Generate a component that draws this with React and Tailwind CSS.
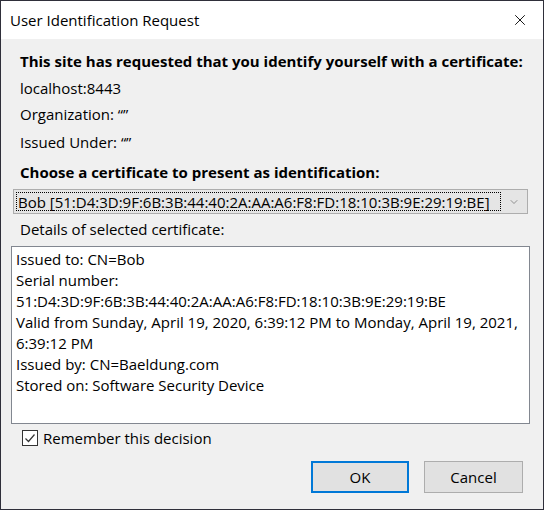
import { X, ChevronDown } from 'lucide-react'

// dialog text, split so every line breaks where the screenshot does
const details = [
  'Issued to: CN=Bob',
  'Serial number:',
  '51:D4:3D:9F:6B:3B:44:40:2A:AA:A6:F8:FD:18:10:3B:9E:29:19:BE',
  'Valid from Sunday, April 19, 2020, 6:39:12 PM to Monday, April 19, 2021,',
  '6:39:12 PM',
  'Issued by: CN=Baeldung.com',
  'Stored on: Software Security Device',
]

export default function App() {
  return (
    <div
      className="w-[544px] h-[510px] flex flex-col border border-[#2f2f3a] bg-[#f0f0f0] text-black text-[15px] leading-[20px]"
      style={{ fontFamily: '"Segoe UI", "Open Sans", sans-serif' }}
    >
      {/* title bar */}
      <div className="h-[38px] bg-white flex items-center justify-between pl-[9px] pr-[14px]">
        <span>User Identification Request</span>
        <X size={18} strokeWidth={1.2} />
      </div>

      <div className="flex flex-col pl-[19px] pt-[12px]">
        <div className="font-bold whitespace-nowrap">This site has requested that you identify yourself with a certificate:</div>
        <div className="mt-[7px]">localhost:8443</div>
        <div className="mt-[6px]">Organization: “”</div>
        <div className="mt-[8px]">Issued Under: “”</div>
        <div className="mt-[10px] font-bold">Choose a certificate to present as identification:</div>
      </div>

      {/* combobox */}
      <div className="mt-[7px] ml-[12px] mr-[15px] h-[25px] flex items-center border border-[#adadad] bg-[#e5e5e5]">
        <div className="ml-[2px] h-[19px] flex-1 flex items-center border border-dotted border-black px-[1px] whitespace-nowrap">
          Bob [51:D4:3D:9F:6B:3B:44:40:2A:AA:A6:F8:FD:18:10:3B:9E:29:19:BE]
        </div>
        <div className="w-[26px] flex justify-center text-[#555]">
          <ChevronDown size={12} strokeWidth={1.2} />
        </div>
      </div>

      <div className="ml-[19px] mt-[5px]">Details of selected certificate:</div>

      {/* details box */}
      <div className="mt-[7px] ml-[10px] mr-[13px] h-[178px] border border-[#828790] bg-white pl-[4px] pt-[2px] leading-[21px]">
        {details.map(line => (
          <div key={line} className="whitespace-nowrap">{line}</div>
        ))}
      </div>

      <label className="mt-[4px] ml-[21px] flex items-center gap-[5px]">
        <span className="w-[16px] h-[16px] border border-[#333] bg-white flex items-center justify-center">
          <svg width="12" height="12" viewBox="0 0 12 12" fill="none" stroke="#333" strokeWidth="1.2">
            <path d="M1.5 6.5 L4.5 9.5 L10.5 2.5" />
          </svg>
        </span>
        <span>Remember this decision</span>
      </label>

      <div className="mt-[13px] flex justify-end gap-[15px] pr-[20px]">
        <button className="w-[98px] h-[32px] border-2 border-[#0078d7] bg-[#e1e1e1]">OK</button>
        <button className="w-[99px] h-[32px] border border-[#adadad] bg-[#e1e1e1]">Cancel</button>
      </div>
    </div>
  )
}
